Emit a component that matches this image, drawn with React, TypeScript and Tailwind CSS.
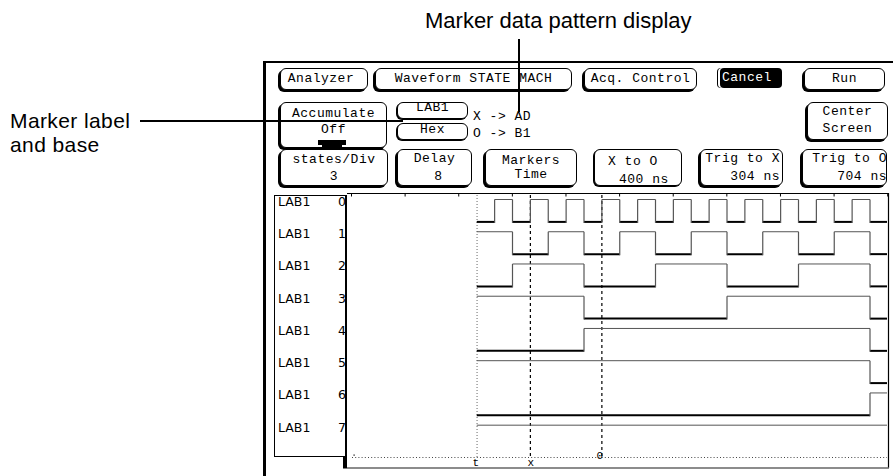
import React from "react";

// timing grid: one state = 17.875px, first state (0xAA) starts at the t marker
const S = 17.875;
const X0 = 584 - 6 * S;
const XEND = 887;
const STATES = 23;
const hiY = (r: number) => 199.5 + 32.24 * r;
const loY = (r: number) => hiY(r) + 22.4;

type Seg = { x1: number; x2: number; level: number };

const trace = (bit: number) => {
  const segs: Seg[] = [];
  const edges: number[] = [];
  let start = X0;
  let cur = (0xaa >> bit) & 1;
  for (let k = 1; k < STATES; k++) {
    const v = ((0xaa + k) >> bit) & 1;
    if (v !== cur) {
      const x = X0 + k * S;
      segs.push({ x1: start, x2: x, level: cur });
      edges.push(x);
      start = x;
      cur = v;
    }
  }
  segs.push({ x1: start, x2: XEND, level: cur });
  return { segs, edges };
};

const rows = [0, 1, 2, 3, 4, 5, 6, 7];

function Key({ className, children }: { className: string; children?: React.ReactNode }) {
  return (
    <div className={"relative flex shrink-0 rounded-[6px] border-[1.5px] border-black bg-white text-black " + className}>
      {children}
    </div>
  );
}

function Waveforms() {
  const ticks = Array.from({ length: 11 }, (_, k) => 351.5 + 53.62 * k);
  return (
    <svg className="-ml-[4px] shrink-0" width={550} height={283} viewBox="343 193 550 283">
      {/* frame of the waveform area */}
      <line x1={347} y1={193.5} x2={888} y2={193.5} stroke="#000" strokeWidth={1} />
      {ticks.map((x) => (
        <line key={x} x1={x} y1={193} x2={x} y2={196.5} stroke="#000" strokeWidth={1} />
      ))}
      <line x1={888.5} y1={193} x2={888.5} y2={468} stroke="#000" strokeWidth={1.2} />
      <line x1={352} y1={457.5} x2={887} y2={457.5} stroke="#444" strokeWidth={1} strokeDasharray="1 2.2" />
      <rect x={353.5} y={454.5} width={1.2} height={1.2} fill="#000" />
      <line x1={347} y1={468} x2={889} y2={468} stroke="#666" strokeWidth={1.5} />
      <rect x={343} y={457} width={4} height={11.5} fill="#000" />

      {/* markers */}
      <line x1={X0 + 0.3} y1={195} x2={X0 + 0.3} y2={457} stroke="#666" strokeWidth={1} strokeDasharray="1 2" />
      <line x1={X0 + 3 * S} y1={195} x2={X0 + 3 * S} y2={457} stroke="#000" strokeWidth={1.2} strokeDasharray="3 3" />
      <line x1={X0 + 7 * S} y1={195} x2={X0 + 7 * S} y2={457} stroke="#000" strokeWidth={1.2} strokeDasharray="3 3" />
      <text x={476} y={466} textAnchor="middle" fontFamily="Liberation Mono, monospace" fontSize={11}>t</text>
      <text x={531} y={466} textAnchor="middle" fontFamily="Liberation Mono, monospace" fontSize={11}>x</text>
      <text x={600} y={459} textAnchor="middle" fontFamily="Liberation Mono, monospace" fontSize={11}>0</text>

      {/* signals */}
      {rows.map((r) => {
        const { segs, edges } = trace(r);
        return (
          <g key={r}>
            {segs.map((s, i) =>
              s.level ? (
                <line key={i} x1={s.x1} y1={hiY(r)} x2={s.x2} y2={hiY(r)} stroke="#555" strokeWidth={1} />
              ) : (
                <line key={i} x1={s.x1} y1={loY(r)} x2={s.x2} y2={loY(r)} stroke="#000" strokeWidth={2} />
              )
            )}
            {edges.map((x) => (
              <line key={x} x1={x} y1={hiY(r)} x2={x} y2={loY(r) + 1} stroke="#555" strokeWidth={1.2} />
            ))}
          </g>
        );
      })}
    </svg>
  );
}

export default function App() {
  return (
    <div className="relative h-[476px] w-[893px] overflow-hidden bg-white pl-[263px] pt-[61px] text-black">
      {/* callouts */}
      <div className="absolute left-[425px] top-[10px] whitespace-nowrap font-['Liberation_Sans',Arial,sans-serif] text-[22px] leading-[22px]">
        Marker data pattern display
      </div>
      <div className="absolute left-[10px] top-[109px] font-['Liberation_Sans',Arial,sans-serif] text-[21px] leading-[23.5px] tracking-[0.4px]">
        <div>Marker label</div>
        <div>and base</div>
      </div>
      <div className="absolute left-[518px] top-[39px] z-20 h-[73px] w-[2px] bg-black" />
      <div className="absolute left-[140px] top-[120px] z-20 h-[2px] w-[263px] bg-black" />

      {/* analyzer screen */}
      <div className="h-[415px] border-l-[3px] border-t-2 border-black font-['Liberation_Mono',monospace] text-[13px] tracking-[0.5px]">
        <div className="flex items-start pt-[5px]">
          <Key className="ml-[14px] h-[22px] w-[88px] items-center justify-center pr-[6px] shadow-[-2px_2px_0_0_#000]">Analyzer</Key>
          <Key className="ml-[7px] h-[22px] w-[197px] items-center justify-center shadow-[-2px_2px_0_0_#000]">Waveform STATE MACH</Key>
          <Key className="ml-[12px] h-[22px] w-[113px] items-center justify-center shadow-[-2px_2px_0_0_#000]">Acq. Control</Key>
          <div className="ml-[23px] flex h-[20px] w-[62px] shrink-0 items-center rounded-[4px] bg-black pl-[2px] text-white shadow-[-2px_0_0_0_#fff,-3px_0_0_0_#000]">
            Cancel
          </div>
          <Key className="ml-[22px] h-[22px] w-[81px] items-center justify-center shadow-[-2px_2px_0_0_#000]">Run</Key>
        </div>

        <div className="mt-[12px] flex items-start">
          <Key className="ml-[14px] h-[46px] w-[107px] flex-col items-center pt-[3px] leading-[15.5px] shadow-[-2px_2px_0_0_#000]">
            <span>Accumulate</span>
            <span>Off</span>
            <div className="absolute left-[37px] top-[37px] z-10 h-[5px] w-[28px] bg-black" />
            <div className="absolute left-[41px] top-[42px] z-10 h-[5px] w-[20px] bg-black" />
          </Key>
          <div className="ml-[10px] flex w-[71px] shrink-0 flex-col">
            <Key className="h-[17px] w-[71px] justify-center leading-[10px] shadow-[-1px_1px_0_0_#000]">LAB1</Key>
            <Key className="mt-[4px] h-[17px] w-[71px] items-center justify-center pb-[3px] leading-[12px] shadow-[-1px_1px_0_0_#000]">Hex</Key>
          </div>
          <div className="ml-[5px] flex w-[334px] shrink-0 flex-col pt-[5.5px] leading-[17px]">
            <span>X -&gt; AD</span>
            <span>O -&gt; B1</span>
          </div>
          <Key className="h-[38px] w-[81px] flex-col items-center leading-[17px] shadow-[-2px_2px_0_0_#000]">
            <span>Center</span>
            <span>Screen</span>
          </Key>
        </div>

        <div className="mt-[1px] flex items-start">
          <Key className="ml-[14px] h-[37px] w-[108px] flex-col items-center pt-[1px] leading-[17px] shadow-[-2px_2px_0_0_#000]">
            <span>states/Div</span>
            <span>3</span>
          </Key>
          <Key className="ml-[9px] h-[37px] w-[75px] flex-col items-center leading-[18px] shadow-[-2px_2px_0_0_#000]">
            <span>Delay</span>
            <span className="pl-[8px]">8</span>
          </Key>
          <Key className="ml-[13px] h-[37px] w-[92px] flex-col items-center pt-[3.5px] leading-[14px] shadow-[-2px_2px_0_0_#000]">
            <span>Markers</span>
            <span>Time</span>
          </Key>
          <Key className="ml-[17px] h-[37px] w-[88px] flex-col items-start pt-[3px] leading-[18px] shadow-[-1px_1px_0_0_#000]">
            <span className="pl-[13px]">X to O</span>
            <span className="pl-[24px]">400 ns</span>
          </Key>
          <Key className="ml-[18px] h-[37px] w-[83px] flex-col items-end pr-[2px] leading-[18px] shadow-[-2px_2px_0_0_#000]">
            <span>Trig to X</span>
            <span>304 ns</span>
          </Key>
          <Key className="ml-[19px] h-[37px] w-[85px] flex-col items-end leading-[18px] shadow-[-2px_2px_0_0_#000]">
            <span className="-mr-[1px]">Trig to O</span>
            <span className="-mr-[1px]">704 ns</span>
          </Key>
        </div>

        <div className="mt-[7px] flex items-start">
          <div className="ml-[8px] mt-[2px] flex h-[262px] w-[73px] shrink-0 flex-col border border-r-2 border-black font-['DejaVu_Sans',sans-serif] text-[12.5px] leading-[12px] tracking-normal">
            {rows.map((r) => (
              <div key={r} className="flex h-[32.24px] shrink-0 justify-between pl-[3px]">
                <span>LAB1</span>
                <span className="-mr-[1px]">{r}</span>
              </div>
            ))}
          </div>
          <Waveforms />
        </div>
      </div>
    </div>
  );
}
